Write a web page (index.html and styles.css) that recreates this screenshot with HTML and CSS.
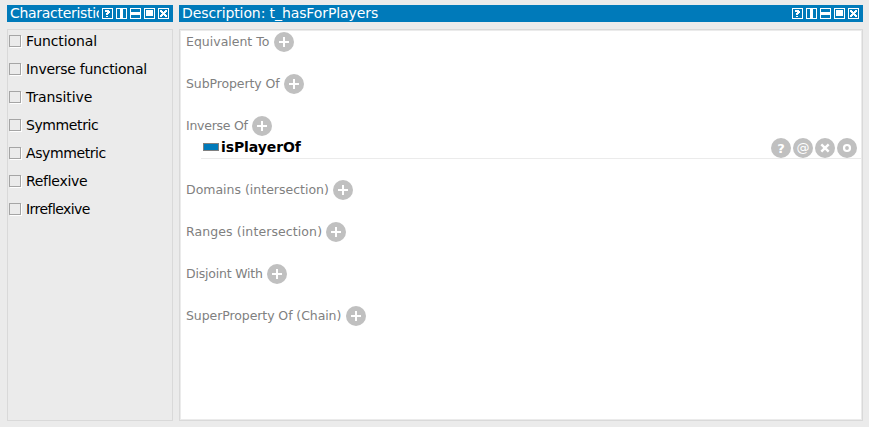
FILE: index.html
```html
<!DOCTYPE html>
<html lang="en">
<head>
<meta charset="utf-8">
<title>Object property</title>
<link rel="stylesheet" href="styles.css">
</head>
<body>
<svg width="0" height="0" class="defs">
  <symbol id="bar" viewBox="0 0 67 11">
    <g fill="none" stroke="#fff" shape-rendering="crispEdges">
      <path d="M.5 .5h10v10h-10zM14.5 .5h10v10h-10zM28.5 .5h10v10h-10zM42.5 .5h10v10h-10zM56.5 .5h10v10h-10z"/>
    </g>
    <g fill="#fff" shape-rendering="crispEdges">
      <path d="M3 2h4v1h1v2h-1v1h-1v1h-2v-2h1v-1h-2zM4 8h2v1h-2z"/>
      <path d="M18 1h3v9h-3zM29 4h9v3h-9zM44 2h7v6h-7z"/>
      <path d="M58 2h2v1h1v1h1v-1h1v-1h2v2h-1v1h-1v1h1v1h1v2h-2v-1h-1v-1h-1v1h-1v1h-2v-2h1v-1h1v-1h-1v-1h-1z"/>
    </g>
  </symbol>
  <symbol id="plus" viewBox="0 0 20 20">
    <circle cx="10" cy="10" r="10" fill="#c0c0c0"/>
    <path d="M9 5h2v4h4v2h-4v4h-2v-4h-4v-2h4z" fill="#fff"/>
  </symbol>
</svg>
<main class="workspace">
  <section class="panel side">
    <header class="title"><h2>Characteristics:</h2><svg class="tools"><use href="#bar"/></svg></header>
    <div class="checks">
      <label><i></i>Functional</label>
      <label><i></i>Inverse functional</label>
      <label><i></i>Transitive</label>
      <label><i></i>Symmetric</label>
      <label><i></i>Asymmetric</label>
      <label><i></i>Reflexive</label>
      <label><i></i>Irreflexive</label>
    </div>
  </section>
  <section class="panel main">
    <header class="title"><h2>Description: t_hasForPlayers</h2><svg class="tools"><use href="#bar"/></svg></header>
    <div class="description">
      <div class="head equivalent"><span>Equivalent To</span><svg><use href="#plus"/></svg></div>
      <div class="head sub"><span>SubProperty Of</span><svg><use href="#plus"/></svg></div>
      <div class="group">
        <div class="head inverse"><span>Inverse Of</span><svg><use href="#plus"/></svg></div>
        <div class="item">
          <i class="swatch"></i><b>isPlayerOf</b>
          <div class="actions">
            <span class="round q">?</span>
            <span class="round at">@</span>
            <svg viewBox="0 0 20 20"><circle cx="10" cy="10" r="10" fill="#c0c0c0"/><path d="M6.3 6.3l7.4 7.4M13.7 6.3l-7.4 7.4" stroke="#fff" stroke-width="2.4"/></svg>
            <svg viewBox="0 0 20 20"><circle cx="10" cy="10" r="10" fill="#c0c0c0"/><circle cx="10" cy="10" r="3" fill="none" stroke="#fff" stroke-width="2.2"/></svg>
          </div>
        </div>
      </div>
      <div class="head domains"><span>Domains (intersection)</span><svg><use href="#plus"/></svg></div>
      <div class="head ranges"><span>Ranges (intersection)</span><svg><use href="#plus"/></svg></div>
      <div class="head disjoint"><span>Disjoint With</span><svg><use href="#plus"/></svg></div>
      <div class="head chain"><span>SuperProperty Of (Chain)</span><svg><use href="#plus"/></svg></div>
    </div>
  </section>
</main>
</body>
</html>
```
FILE: styles.css
```css
* { box-sizing: border-box; }
body {
  margin: 0;
  background: #ebebeb;
  font-family: "DejaVu Sans", sans-serif;
  color: #000;
}
.defs { display: none; }
svg { display: block; flex: none; }
.workspace {
  display: flex;
  gap: 6px;
  height: 427px;
  padding: 5px 6px 6px 7px;
}
.panel {
  display: flex;
  flex-direction: column;
  gap: 7px;
}
.side { width: 166px; }
.main { flex: 1; min-width: 0; }
.title {
  display: flex;
  align-items: center;
  gap: 3px;
  height: 17px;
  padding: 0 4px 0 3px;
  background: #007aba;
}
.title h2 {
  flex: 1;
  margin: 0;
  overflow: hidden;
  white-space: nowrap;
  font-size: 14px;
  font-weight: normal;
  line-height: 17px;
  letter-spacing: -0.1px;
  color: #fff;
}
.side h2 { letter-spacing: -0.3px; }
.tools { width: 67px; height: 11px; }
.checks {
  flex: 1;
  display: flex;
  flex-direction: column;
  gap: 6px;
  padding-left: 1px;
  border: 1px solid #d9d9d9;
}
.checks label {
  display: flex;
  align-items: center;
  gap: 5px;
  height: 22px;
  font-size: 14px;
  letter-spacing: -0.4px;
  white-space: nowrap;
}
.checks label:nth-child(1) { letter-spacing: -0.1px; }
.checks label:nth-child(2) { letter-spacing: -0.27px; }
.checks label:nth-child(3) { letter-spacing: -0.1px; }
.checks label:nth-child(6) { letter-spacing: -0.3px; }
.checks label:nth-child(7) { letter-spacing: -0.55px; }
.checks i {
  width: 12px;
  height: 12px;
  border: 1px solid #a5a5a5;
  box-shadow: 1px 1px 0 #fff;
}
.description {
  flex: 1;
  display: flex;
  flex-direction: column;
  gap: 22px;
  padding: 2px 1px 1px 6px;
  background: #fff;
  border: 1px solid #d9d9d9;
  box-shadow: inset 0 0 0 1px #ebebeb;
}
.head {
  display: flex;
  align-items: center;
  gap: 4px;
  height: 20px;
  font-size: 12.5px;
  line-height: 20px;
  color: #808080;
  white-space: nowrap;
}
.head svg, .actions svg { width: 20px; height: 20px; }
.equivalent span { width: 84px; }
.sub span { width: 94px; letter-spacing: -0.1px; }
.inverse span { width: 62px; letter-spacing: -0.25px; }
.domains span { width: 143px; }
.ranges span { width: 136px; letter-spacing: 0.1px; }
.disjoint span { width: 77px; letter-spacing: -0.2px; }
.chain span { width: 156px; letter-spacing: -0.08px; }
.item {
  display: flex;
  align-items: center;
  height: 22px;
  margin: 1px 0 -1px 15px;
  padding: 0 4px 0 2px;
  border-bottom: 1px solid #ebebeb;
  font-size: 14px;
}
.item b {
  letter-spacing: -0.1px;
  line-height: 18px;
  margin-bottom: 2px;
}
.swatch {
  width: 16px;
  height: 8px;
  margin: 0 2px 1px 0;
  background: #007aba;
  border: 1px solid #808080;
}
.actions {
  display: flex;
  gap: 2px;
  height: 20px;
  margin: 1px 0 0 auto;
}
.round {
  width: 20px;
  height: 20px;
  border-radius: 50%;
  background: #c0c0c0;
  color: #fff;
  text-align: center;
  line-height: 20px;
}
.q { font-size: 13px; font-weight: bold; line-height: 21px; }
.at { font-size: 13px; line-height: 19px; }
```
